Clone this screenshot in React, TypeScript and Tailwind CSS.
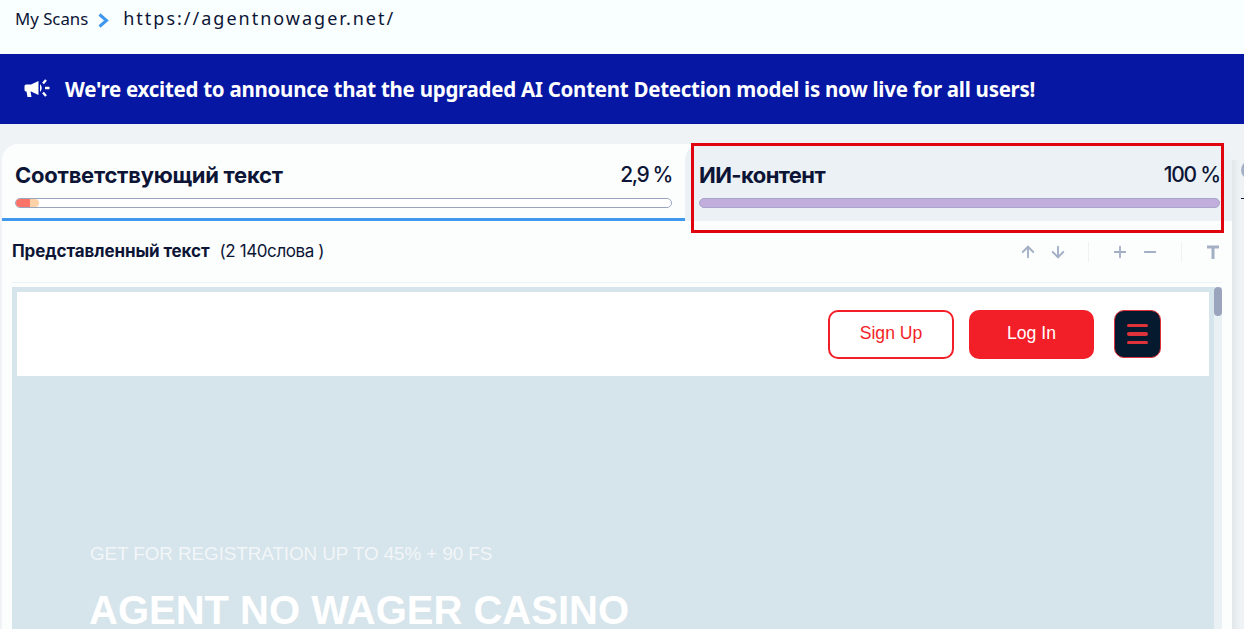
import React from 'react';
import { ArrowUp, ArrowDown, Plus, Minus } from 'lucide-react';

function Megaphone() {
  return (
    <svg width="26" height="20" viewBox="0 0 26 20" fill="white">
      <path d="M0.5 7 Q0.5 5.5 2 5.5 H7 L14.5 2 V16 L7 12.5 H6.5 L7.5 18 H3.5 L2.5 12.5 Q0.5 12.5 0.5 11 Z" />
      <path d="M16 5 Q19.5 9 16 13 Z" />
      <path d="M19 4.5 L22 1 M21 9 H25.5 M19 13.5 L22 17" stroke="white" strokeWidth="2.4" fill="none" />
    </svg>
  );
}

export default function App() {
  return (
    <div className="w-[1244px] h-[629px] overflow-hidden bg-[#eff3f5] relative font-['Inter','Noto_Sans',sans-serif]">
      {/* breadcrumb */}
      <div className="h-[54px] bg-[#f9fefe] flex items-start pl-[15px] pt-[7px] text-[#0d1536]">
        <span className="font-['Noto_Sans',sans-serif] text-[16.8px] leading-[24px]">My Scans</span>
        <svg width="13" height="15" viewBox="0 0 13 15" fill="none" className="ml-[9px] mt-[6px]">
          <path d="M2.5 1.5 L9.5 7.5 L2.5 13.5" stroke="#3f97ee" strokeWidth="3" />
        </svg>
        <span className="font-['Noto_Sans',sans-serif] text-[18px] leading-[24px] tracking-[2px] ml-[13px] mt-[-1px]">https://agentnowager.net/</span>
      </div>

      {/* announcement */}
      <div className="h-[70px] bg-[#0517a3] flex items-center pl-[24px] text-white">
        <Megaphone />
        <span className="font-['Noto_Sans',sans-serif] font-bold text-[20.5px] ml-[15px] tracking-[-0.27px]">We're excited to announce that the upgraded AI Content Detection model is now live for all users!</span>
      </div>

      {/* results card */}
      <div className="mt-[20px] ml-[2px] w-[1230px] h-[485px] bg-[#fcfefe] rounded-t-[16px] flex flex-col overflow-hidden">
        <div className="flex h-[77px] shrink-0">
          <div className="w-[683px] pl-[13px] pr-[13px] pt-[17px] border-b-[3px] border-[#3f97ee]">
            <div className="flex justify-between items-center text-[#0d1536] h-[28px]">
              <span className="font-bold text-[22px] tracking-[-0.25px]">Соответствующий текст</span>
              <span className="font-medium text-[21px] tracking-[-1.4px]">2,9 %</span>
            </div>
            <div className="mt-[9px] h-[10px] rounded-full border border-[#9aa5bd] bg-white overflow-hidden flex">
              <div className="w-[14px] bg-[#fb7268]" />
              <div className="w-[9px] bg-[#fcd2a6] rounded-r-full" />
            </div>
          </div>
          <div className="flex-1 bg-[#ebf1f4] rounded-t-[16px] pl-[14px] pr-[12px] pt-[17px]">
            <div className="flex justify-between items-center text-[#0d1536] h-[28px]">
              <span className="font-bold text-[22px] tracking-[-0.6px]">ИИ-контент</span>
              <span className="font-medium text-[21px] tracking-[-1.2px]">100 %</span>
            </div>
            <div className="mt-[9px] h-[10px] rounded-full border border-[#a9a4c9] bg-[#c1aedc]" />
          </div>
        </div>

        {/* toolbar */}
        <div className="mx-[10px] h-[62px] shrink-0 flex items-center border-b border-[#edf2f5] text-[#0d1536]">
          <span className="font-bold text-[17px] tracking-[-0.1px]">Представленный текст</span>
          <span className="text-[17px] ml-[10px] tracking-[-0.4px]">(2 140слова )</span>
          <div className="ml-auto flex items-center text-[#a3afc4] pr-[2px]">
            <ArrowUp className="w-[18px] h-[18px]" strokeWidth={2.5} />
            <ArrowDown className="w-[18px] h-[18px] ml-[12px]" strokeWidth={2.5} />
            <div className="w-px h-[20px] bg-[#edf2f5] ml-[21px]" />
            <Plus className="w-[18px] h-[18px] ml-[22px]" strokeWidth={2.5} />
            <Minus className="w-[18px] h-[18px] ml-[12px]" strokeWidth={2.5} />
            <div className="w-px h-[20px] bg-[#edf2f5] ml-[22px]" />
            <svg width="14" height="14" viewBox="0 0 14 14" fill="none" stroke="#a3afc4" strokeWidth="3" className="ml-[24px]">
              <path d="M1 2 H13 M7 2 V14" />
            </svg>
          </div>
        </div>

        {/* scanned page preview */}
        <div className="ml-[10px] mt-[4px] w-[1210px] flex-1 flex bg-[#d6e4eb] min-h-0">
          <div className="flex-1 pt-[5px] pl-[5px] pr-[5px] font-['Liberation_Sans',sans-serif]">
            <div className="h-[84px] bg-white flex items-center justify-end pr-[48px]">
              <div className="w-[126px] h-[49px] pb-[2px] rounded-[10px] border-2 border-[#f31f28] text-[#f31f28] text-[17.6px] flex items-center justify-center">Sign Up</div>
              <div className="w-[125px] h-[49px] pb-[2px] ml-[15px] rounded-[10px] bg-[#f31f28] text-white text-[17.6px] flex items-center justify-center">Log In</div>
              <div className="w-[47px] h-[48px] ml-[20px] rounded-[10px] bg-[#051a2e] border border-[#e0323a] flex flex-col items-center justify-center gap-[5px]">
                <div className="w-[21px] h-[3.5px] rounded-full bg-[#e0323a]" />
                <div className="w-[21px] h-[3.5px] rounded-full bg-[#e0323a]" />
                <div className="w-[21px] h-[3.5px] rounded-full bg-[#e0323a]" />
              </div>
            </div>
            <div className="pl-[73px] pt-[166px] text-white">
              <div className="text-[18.9px] leading-[24px] text-white/70 tracking-[-0.1px]">GET FOR REGISTRATION UP TO 45% + 90 FS</div>
              <div className="text-[40px] leading-[48px] font-bold mt-[20px] ml-[-1px]">AGENT NO WAGER CASINO</div>
            </div>
          </div>
          <div className="w-[8px] bg-[#e9f1f5] shrink-0">
            <div className="h-[29px] rounded-[4px] bg-[#9aa5bd]" />
          </div>
        </div>
      </div>

      {/* soft shadow next to the card and the next card peeking in */}
      <div className="absolute left-[1232px] top-[160px] bottom-0 w-[8px] bg-gradient-to-r from-[#e1e7ea] to-[#eff3f5]" />
      <div className="absolute left-[1241px] top-[160px] w-[20px] h-[20px] rounded-full bg-[#a3afc4]" />
      <div className="absolute left-[1241px] top-[198px] w-[3px] h-px bg-[#0d1536]" />

      {/* red annotation frame */}
      <div className="absolute left-[691px] top-[143px] w-[533px] h-[90px] border-[3px] border-[#e0040f]" />
    </div>
  );
}
